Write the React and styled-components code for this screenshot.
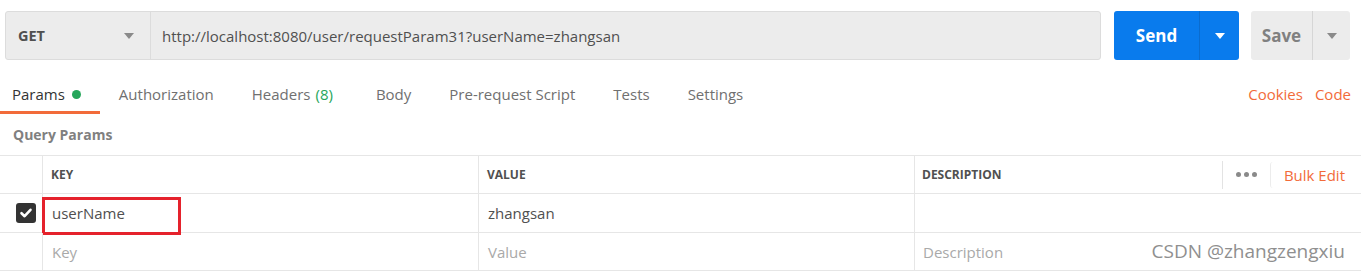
import React from "react";
import styled, { createGlobalStyle } from "styled-components";

const GlobalStyle = createGlobalStyle`
  body {
    margin: 0;
    background: #fff;
    font-family: "Open Sans", "Noto Sans", sans-serif;
    overflow: hidden;
  }
`;

const Page = styled.div`
  width: 1361px;
  height: 275px;
  position: relative;
  background: #fff;
`;

const TopBar = styled.div`
  display: flex;
  align-items: stretch;
  height: 49px;
  padding: 11px 11px 0 5px;
  gap: 13px;
`;

const UrlBox = styled.div`
  flex: 1;
  display: flex;
  background: #ececec;
  border: 1px solid #dcdcdc;
  border-radius: 3px;
`;

const Method = styled.div`
  display: flex;
  align-items: center;
  justify-content: space-between;
  padding: 0 16px 0 12px;
  box-sizing: border-box;
  width: 145px;
  border-right: 1px solid #dcdcdc;
  font-size: 14.5px;
  font-weight: 700;
  color: #505050;
`;

const Caret = styled.span`
  width: 0;
  height: 0;
  border-left: 5px solid transparent;
  border-right: 5px solid transparent;
  border-top: 6px solid ${(p) => p.color || "#8a8a8a"};
`;

const UrlText = styled.div`
  display: flex;
  align-items: center;
  padding-left: 11px;
  font-size: 15px;
  color: #505050;
`;

const SplitButton = styled.div`
  display: flex;
  border-radius: 3px;
  background: ${(p) => (p.primary ? "#097bed" : "#ececec")};
  color: ${(p) => (p.primary ? "#fff" : "#808080")};
  margin-left: ${(p) => p.gapLeft || 0}px;
`;

const ButtonLabel = styled.div`
  width: ${(p) => p.w}px;
  box-sizing: border-box;
  display: flex;
  align-items: center;
  justify-content: center;
  font-size: 17px;
  font-weight: 700;
  border-right: 1px solid ${(p) => (p.primary ? "#0a6ccf" : "#d6d6d6")};
`;

const ButtonArrow = styled.div`
  width: ${(p) => p.w}px;
  display: flex;
  align-items: center;
  justify-content: center;
`;

const TabsRow = styled.div`
  display: flex;
  align-items: stretch;
  justify-content: space-between;
  height: 54px;
`;

const Tabs = styled.div`
  display: flex;
  margin-left: -7px;
`;

const Tab = styled.div`
  display: flex;
  align-items: center;
  padding: 17px ${(p) => 19 + (p.extra || 0)}px 0 19px;
  font-size: 15px;
  color: ${(p) => (p.active ? "#333" : "#707070")};
  border-bottom: 3px solid ${(p) => (p.active ? "#f26b3a" : "transparent")};
`;

const Dot = styled.span`
  width: 9px;
  height: 9px;
  border-radius: 50%;
  background: #26a65b;
  margin-left: 7px;
`;

const Count = styled.span`
  color: #26a65b;
  margin-left: 5px;
`;

const Links = styled.div`
  display: flex;
  align-items: center;
  gap: 12px;
  padding: 14px 10px 0 0;
  font-size: 15px;
  color: #f26b3a;
`;

const SectionTitle = styled.div`
  height: 41px;
  display: flex;
  align-items: center;
  padding-left: 13px;
  font-size: 14px;
  font-weight: 700;
  color: #808080;
`;

const Table = styled.div`
  border-top: 1px solid #e6e6e6;
`;

const Row = styled.div`
  display: grid;
  grid-template-columns: 42px 436px 436px 1fr;
  height: ${(p) => p.h}px;
  border-bottom: 1px solid #e6e6e6;
  box-sizing: border-box;
`;

const Cell = styled.div`
  display: flex;
  align-items: center;
  padding-left: ${(p) => p.pad ?? 9}px;
  border-left: ${(p) => (p.first ? "none" : "1px solid #e6e6e6")};
  font-size: ${(p) => (p.head ? 12 : 15)}px;
  font-weight: ${(p) => (p.head ? 700 : 400)};
  color: ${(p) => (p.head ? "#505050" : p.muted ? "#a9a9a9" : "#505050")};
  position: relative;
`;

const CheckCell = styled(Cell)`
  justify-content: flex-end;
  padding: 0 6px 0 0;
`;

const Checkbox = styled.div`
  width: 20px;
  height: 20px;
  border-radius: 3px;
  background: #333;
  display: flex;
  align-items: center;
  justify-content: center;
`;

const HeadActions = styled.div`
  margin-left: auto;
  display: flex;
  align-items: center;
  height: 100%;
`;

const More = styled.div`
  height: 28px;
  display: flex;
  align-items: center;
  gap: 3px;
  padding: 0 13px 0 13px;
  border-left: 1px solid #e3e3e3;
`;

const MoreDot = styled.span`
  width: 5px;
  height: 5px;
  border-radius: 50%;
  background: #8a8a8a;
`;

const BulkEdit = styled.div`
  height: 26px;
  display: flex;
  align-items: center;
  padding: 0 16px 0 13px;
  border-left: 1px solid #ececec;
  border-radius: 3px 0 0 3px;
  font-size: 15px;
  font-weight: 400;
  color: #f26b3a;
`;

const Highlight = styled.div`
  position: absolute;
  left: -1px;
  top: 3px;
  width: 139px;
  height: 38px;
  border: 3px solid #e5222c;
  box-sizing: border-box;
`;

const Watermark = styled.div`
  position: absolute;
  right: 16px;
  bottom: 11px;
  font-size: 19px;
  color: #8f8f8f;
`;

const TriangleIcon = ({ color }) => <Caret color={color} />;

export default function App() {
  return (
    <Page>
      <GlobalStyle />
      <TopBar>
        <UrlBox>
          <Method>
            GET
            <TriangleIcon />
          </Method>
          <UrlText>http://localhost:8080/user/requestParam31?userName=zhangsan</UrlText>
        </UrlBox>
        <SplitButton primary>
          <ButtonLabel primary w={86}>Send</ButtonLabel>
          <ButtonArrow w={39}>
            <TriangleIcon color="#fff" />
          </ButtonArrow>
        </SplitButton>
        <SplitButton gapLeft={-1}>
          <ButtonLabel w={62}>Save</ButtonLabel>
          <ButtonArrow w={37}>
            <TriangleIcon color="#8a8a8a" />
          </ButtonArrow>
        </SplitButton>
      </TopBar>

      <TabsRow>
        <Tabs>
          <Tab active>
            Params<Dot />
          </Tab>
          <Tab>Authorization</Tab>
          <Tab extra={5}>
            Headers<Count>(8)</Count>
          </Tab>
          <Tab>Body</Tab>
          <Tab>Pre-request Script</Tab>
          <Tab>Tests</Tab>
          <Tab>Settings</Tab>
        </Tabs>
        <Links>
          <span>Cookies</span>
          <span>Code</span>
        </Links>
      </TabsRow>

      <SectionTitle>Query Params</SectionTitle>

      <Table>
        <Row h={38}>
          <Cell first />
          <Cell head pad={8}>KEY</Cell>
          <Cell head pad={8}>VALUE</Cell>
          <Cell head pad={7}>
            DESCRIPTION
            <HeadActions>
              <More>
                <MoreDot />
                <MoreDot />
                <MoreDot />
              </More>
              <BulkEdit>Bulk Edit</BulkEdit>
            </HeadActions>
          </Cell>
        </Row>
        <Row h={39}>
          <CheckCell first>
            <Checkbox>
              <svg width="14" height="14" viewBox="0 0 14 14">
                <path d="M2.5 7.2 L5.6 10.2 L11.5 3.8" fill="none" stroke="#fff" strokeWidth="2.6" strokeLinecap="round" strokeLinejoin="round" />
              </svg>
            </Checkbox>
          </CheckCell>
          <Cell>
            userName
            <Highlight />
          </Cell>
          <Cell>zhangsan</Cell>
          <Cell />
        </Row>
        <Row h={38}>
          <Cell first />
          <Cell muted>Key</Cell>
          <Cell muted>Value</Cell>
          <Cell muted pad={8}>Description</Cell>
        </Row>
      </Table>
      <Watermark>CSDN @zhangzengxiu</Watermark>
    </Page>
  );
}
